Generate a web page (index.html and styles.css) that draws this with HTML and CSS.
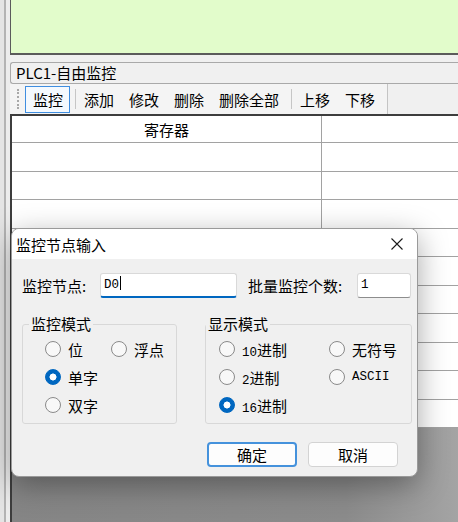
FILE: index.html
```html
<!DOCTYPE html>
<html lang="zh-CN">
<head>
    <meta charset="UTF-8">
    <meta name="viewport" content="width=device-width, initial-scale=1.0">
    <title>PLC1-自由监控</title>
    <link rel="stylesheet" href="styles.css">
</head>
<body>

<div class="window">
    <!-- Left window frame -->
    <div class="frame-left"></div>

    <div class="main">
        <!-- Trend area -->
        <div class="chart-panel"></div>

        <div class="panel-title">PLC1-自由监控</div>

        <!-- Toolbar -->
        <div class="toolbar">
            <span class="grip"></span>
            <button class="tool active">监控</button>
            <span class="tool-sep"></span>
            <button class="tool">添加</button>
            <button class="tool">修改</button>
            <button class="tool">删除</button>
            <button class="tool">删除全部</button>
            <span class="tool-sep"></span>
            <button class="tool">上移</button>
            <button class="tool">下移</button>
        </div>

        <!-- Register list -->
        <div class="grid">
            <table class="reg-table">
                <thead>
                    <tr><th class="col-reg">寄存器</th><th></th></tr>
                </thead>
                <tbody>
                    <tr><td class="col-reg"></td><td></td></tr>
                    <tr><td class="col-reg"></td><td></td></tr>
                    <tr><td class="col-reg"></td><td></td></tr>
                    <tr><td class="col-reg"></td><td></td></tr>
                    <tr><td class="col-reg"></td><td></td></tr>
                    <tr><td class="col-reg"></td><td></td></tr>
                    <tr><td class="col-reg"></td><td></td></tr>
                    <tr><td class="col-reg"></td><td></td></tr>
                    <tr><td class="col-reg"></td><td></td></tr>
                    <tr><td class="col-reg"></td><td></td></tr>
                </tbody>
            </table>
            <div class="grid-empty"></div>
        </div>
    </div>
</div>

<!-- Node input dialog -->
<div class="dialog">
    <div class="dialog-title">
        <span>监控节点输入</span>
        <span class="close-btn">
            <svg width="12" height="12" viewBox="0 0 12 12">
                <path d="M0.5 0.5 L11.5 11.5 M11.5 0.5 L0.5 11.5" stroke="#1b1b1b" stroke-width="1.1" fill="none"/>
            </svg>
        </span>
    </div>

    <div class="dialog-body">
        <div class="field-row">
            <span class="field-label node-label">监控节点:</span>
            <div class="text-input node-input focused">D0<span class="caret"></span></div>
            <span class="field-label count-label">批量监控个数:</span>
            <div class="text-input count-input">1</div>
        </div>

        <div class="group-row">
            <fieldset class="group mode-group">
                <legend>监控模式</legend>
                <div class="radio-grid">
                    <label class="radio"><span class="dot"></span><span>位</span></label>
                    <label class="radio"><span class="dot"></span><span>浮点</span></label>
                    <label class="radio"><span class="dot checked"></span><span>单字</span></label>
                    <span></span>
                    <label class="radio"><span class="dot"></span><span>双字</span></label>
                </div>
            </fieldset>

            <fieldset class="group display-group">
                <legend>显示模式</legend>
                <div class="radio-grid">
                    <label class="radio"><span class="dot"></span><span><span class="num">10</span>进制</span></label>
                    <label class="radio"><span class="dot"></span><span>无符号</span></label>
                    <label class="radio"><span class="dot"></span><span><span class="num">2</span>进制</span></label>
                    <label class="radio"><span class="dot"></span><span class="num">ASCII</span></label>
                    <label class="radio"><span class="dot checked"></span><span><span class="num">16</span>进制</span></label>
                </div>
            </fieldset>
        </div>

        <div class="dialog-buttons">
            <button class="btn default">确定</button>
            <button class="btn">取消</button>
        </div>
    </div>
</div>

</body>
</html>
```

FILE: styles.css
```css
/* General */
* {
    box-sizing: border-box;
}

body {
    margin: 0;
    width: 458px;
    height: 522px;
    overflow: hidden;
    position: relative;
    font-family: "Noto Sans CJK SC", "Microsoft YaHei", sans-serif;
    font-size: 15px;
    color: #000;
    background-color: #f0f0f0;
}

button {
    font-family: inherit;
    font-size: 15px;
    color: #000;
}

/* Main window */
.window {
    display: flex;
    height: 522px;
}

.frame-left {
    width: 10px;
    flex: none;
    background: linear-gradient(to right, #e4e4e4 0 4px, #b3b3b3 4px 6px, #ececec 6px 10px);
}

.main {
    flex: 1;
    min-width: 0;
    display: flex;
    flex-direction: column;
}

.chart-panel {
    height: 55px;
    flex: none;
    background-color: #e2fccb;
    border-left: 1px solid #5b5b5b;
    border-bottom: 2px solid #5b5b5b;
}

.panel-title {
    flex: none;
    height: 22px;
    margin-top: 7px;
    padding-left: 5px;
    line-height: 20px;
    border: 1px solid #a9a9a9;
    border-right: none;
    border-radius: 3px 0 0 3px;
}

/* Toolbar */
.toolbar {
    flex: none;
    width: 378px;
    height: 30px;
    display: flex;
    align-items: center;
    padding-left: 7px;
    background-color: #f4f4f4;
    border-right: 1px solid #c4c4c4;
}

.grip {
    width: 2px;
    height: 20px;
    margin-right: 6px;
    border-left: 2px dotted #a8a8a8;
}

.tool {
    height: 27px;
    padding: 0 6px 0 7px;
    border: 1px solid transparent;
    background: none;
    line-height: 25px;
}

.tool.active {
    border-color: #3f8ee0;
    background-color: #f4f9fe;
}

.tool-sep {
    width: 1px;
    height: 20px;
    margin-left: 5px;
    background-color: #c6c6c6;
}

/* Register grid */
.grid {
    flex: 1;
    display: flex;
    flex-direction: column;
    border-top: 2px solid #3d3d3d;
    border-left: 2px solid #3d3d3d;
}

.reg-table {
    width: 100%;
    table-layout: fixed;
    border-collapse: separate;
    border-spacing: 0;
    background-color: #fff;
}

.reg-table th,
.reg-table td {
    padding: 0;
    border-bottom: 1px solid #a2a2a2;
}

.reg-table th {
    height: 27px;
    font-weight: normal;
    text-align: center;
}

.reg-table td {
    height: 28.5px;
}

.reg-table .col-reg {
    width: 310px;
    border-right: 1px solid #a2a2a2;
}

.grid-empty {
    flex: 1;
    background: linear-gradient(to right, #858585 0%, #8b8b8b 75%, #a4a4a4 100%);
}

/* Dialog */
.dialog {
    position: absolute;
    left: 11px;
    top: 228px;
    width: 407px;
    height: 249px;
    overflow: hidden;
    background-color: #f0f0f0;
    border: 1px solid #9a9a9a;
    border-radius: 8px;
    box-shadow: 0 8px 30px rgba(0, 0, 0, 0.35);
}

.dialog-title {
    height: 30px;
    display: flex;
    align-items: center;
    justify-content: space-between;
    padding-left: 4px;
    background-color: #fff;
}

.close-btn {
    width: 40px;
    height: 30px;
    display: flex;
    align-items: center;
    justify-content: center;
}

.dialog-body {
    padding: 14px 0 0 10px;
}

.field-row {
    display: flex;
    align-items: center;
    height: 25px;
}

.node-label {
    width: 78px;
}

.count-label {
    width: 109px;
    margin-left: 11px;
}

.text-input {
    height: 25px;
    padding-left: 3px;
    line-height: 23px;
    font-family: "Liberation Mono", monospace;
    font-size: 12.5px;
    background-color: #fff;
    border: 1px solid #d9d9d9;
    border-bottom-color: #8d8d8d;
    border-radius: 3px;
}

.node-input {
    width: 137px;
}

.count-input {
    width: 54px;
}

.text-input.focused {
    border-bottom: 2px solid #0067c0;
}

.caret {
    display: inline-block;
    width: 1px;
    height: 14px;
    margin-left: 1px;
    vertical-align: -2px;
    background-color: #000;
}

/* Option groups */
.group-row {
    display: flex;
    gap: 28px;
    margin-top: 17px;
}

.group {
    margin: 0;
    padding: 0;
    border: 1px solid #d8d8d8;
    border-radius: 3px;
}

.group legend {
    padding: 0 2px;
    line-height: 18px;
}

.mode-group {
    width: 155px;
}

.mode-group legend {
    margin-left: 6px;
}

.display-group {
    width: 207px;
}

.display-group legend {
    margin-left: 0;
}

.radio-grid {
    display: grid;
    padding: 2px 0 4px 0;
}

.mode-group .radio-grid {
    grid-template-columns: 66px auto;
    padding-left: 22px;
}

.display-group .radio-grid {
    grid-template-columns: 110px auto;
    padding-left: 13px;
}

.radio {
    height: 28px;
    display: flex;
    align-items: center;
    white-space: nowrap;
}

.dot {
    width: 16px;
    height: 16px;
    flex: none;
    margin-right: 7px;
    border: 1px solid #8a8a8a;
    border-radius: 50%;
    background-color: #f8f8f8;
}

.dot.checked {
    border-color: #0067c0;
    background: radial-gradient(circle, #fff 0 3.2px, #0067c0 3.8px);
}

.num {
    font-family: "Liberation Mono", monospace;
    font-size: 12.5px;
}

/* Dialog buttons */
.dialog-buttons {
    display: flex;
    justify-content: flex-end;
    gap: 11px;
    margin-top: 18px;
    padding-right: 19px;
}

.btn {
    width: 90px;
    height: 25px;
    padding: 0;
    background-color: #fdfdfd;
    border: 1px solid #d3d3d3;
    border-radius: 4px;
}

.btn.default {
    border: 2px solid #4592dc;
}
```
